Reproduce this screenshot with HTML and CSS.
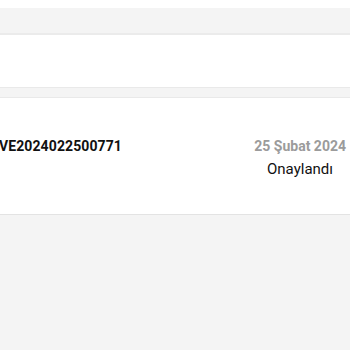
FILE: index.html
```html
<!DOCTYPE html>
<html lang="tr">
<head>
<meta charset="utf-8">
<link rel="stylesheet" href="styles.css">
</head>
<body>
<div class="top-space"></div>
<div class="header-bar"></div>
<div class="card card-empty"></div>
<div class="gap"></div>
<div class="card card-order">
  <div class="row">
    <div class="order-id">VE2024022500771</div>
    <div class="meta">
      <div class="date">25 Şubat 2024</div>
      <div class="status">Onaylandı</div>
    </div>
  </div>
</div>
<div class="rest"></div>
</body>
</html>
```

FILE: styles.css
```css
html, body {
  margin: 0;
  padding: 0;
  background: #f4f4f4;
  font-family: Roboto, "Noto Sans", sans-serif;
}
.top-space {
  height: 8px;
  background: #fff;
}
.header-bar {
  height: 25px;
  background: #f4f4f4;
  border-bottom: 2px solid #ebebeb;
}
.card {
  background: #fff;
}
.card-empty {
  height: 52px;
}
.gap {
  height: 9px;
  background: #f4f4f4;
  border-top: 1px solid #e9e9e9;
  border-bottom: 1px solid #e9e9e9;
}
.card-order {
  height: 116px;
  border-bottom: 1px solid #e3e3e3;
  padding: 0 4px 0 0;
}
.row {
  display: flex;
  justify-content: space-between;
  align-items: flex-start;
  padding-top: 39px;
}
.order-id {
  font-size: 14px;
  font-weight: 700;
  color: #111;
  margin-left: -1px;
  line-height: 18px;
  letter-spacing: 0.1px;
}
.meta {
  display: flex;
  flex-direction: column;
  align-items: flex-end;
}
.date {
  font-size: 14px;
  font-weight: 700;
  color: #9b9b9b;
  line-height: 18px;
}
.status {
  font-size: 15px;
  color: #111;
  line-height: 20px;
  margin-top: 4px;
  margin-right: 13px;
}
.rest {
  height: 140px;
}
```
